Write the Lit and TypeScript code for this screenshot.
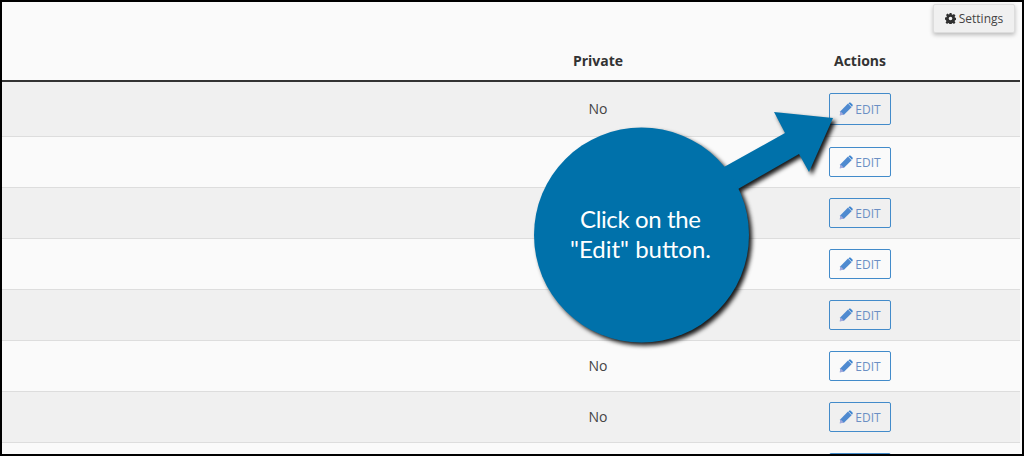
import {LitElement, css, html, svg} from 'lit';
import {customElement} from 'lit/decorators.js';

const ROWS = [
  {h: 55, top: 11, btn: 32, no: true},
  {h: 51, top: 10, btn: 30, no: false},
  {h: 51, top: 10, btn: 30, no: false},
  {h: 51, top: 10, btn: 30, no: false},
  {h: 51, top: 10, btn: 30, no: false},
  {h: 51, top: 10, btn: 30, no: true},
  {h: 51, top: 10, btn: 30, no: true},
  {h: 51, top: 10, btn: 30, no: false},
];

const pencil = svg`<path d="M.8 13.2 1.4 9.2 9 1.6l3.6 3.6L5 12.8z" fill="#4f8ad0"/><path d="M.8 13.2 1.4 9.2l3.6 3.6z" fill="#a3a9dc"/><path d="M9.9.9c.6-.6 1.4-.6 2 0l1.4 1.4c.6.6.6 1.4 0 2l-.3.4L9.4 1.2z" fill="#3f86d0"/>`;

const gear = svg`<path fill-rule="evenodd" fill="#2f2f2f" d="M4.9 0h2.2l.3 1.6 1 .4L9.8 1.1l1.6 1.6-.9 1.4.4 1 1.6.3v2.2l-1.6.3-.4 1 .9 1.4-1.6 1.6-1.4-.9-1 .4-.3 1.6H4.9l-.3-1.6-1-.4-1.4.9-1.6-1.6.9-1.4-.4-1L0 7.1V4.9l1.6-.3.4-1-.9-1.4 1.6-1.6 1.4.9 1-.4zM6 4a2 2 0 1 0 0 4 2 2 0 0 0 0-4z"/>`;

@customElement('app-root')
export class AppRoot extends LitElement {
  static override styles = css`
    :host {
      display: block;
      width: 1024px;
      height: 456px;
      overflow: hidden;
      font-family: 'Open Sans', sans-serif;
      color: #333;
    }

    .frame {
      position: relative;
      box-sizing: border-box;
      height: 456px;
      border: 2px solid #000;
      padding-right: 2px;
      background: #fafafa;
      overflow: hidden;
    }

    .head {
      height: 80px;
      box-sizing: border-box;
      border-bottom: 2px solid #333;
      display: grid;
      grid-template-columns: 1fr 120px 142px 120px 100px;
      grid-template-rows: 1fr auto;
      font-size: 14px;
      font-weight: 700;
    }

    .settings-wrap {
      grid-column: 1 / -1;
      display: flex;
      justify-content: flex-end;
      padding: 2px 5px 0 0;
      align-items: flex-start;
    }

    .settings {
      display: flex;
      align-items: center;
      gap: 3px;
      box-sizing: border-box;
      width: 82px;
      height: 29px;
      justify-content: center;
      background: #f0f0f0;
      border: 1px solid #ddd;
      border-radius: 2px;
      box-shadow: 0 2px 4px rgba(0, 0, 0, 0.25);
      font-size: 12px;
      font-weight: 400;
      color: #444;
    }

    .settings svg {
      width: 11px;
      height: 11px;
    }

    .th {
      padding-bottom: 10px;
      text-align: center;
      line-height: 19px;
    }

    .private {
      grid-column: 2;
    }

    .actions {
      grid-column: 4;
    }

    .row {
      display: grid;
      grid-template-columns: 1fr 120px 142px 120px 100px;
      box-sizing: border-box;
      border-bottom: 1px solid #ddd;
      font-size: 14px;
    }

    .row:nth-child(odd) {
      background: #f0f0f0;
    }

    .cell-no {
      grid-column: 2;
      align-self: center;
      text-align: center;
      line-height: 19px;
      padding-bottom: 2px;
      color: #444;
    }

    .cell-btn {
      grid-column: 4;
      display: flex;
      justify-content: center;
      align-items: flex-start;
    }

    .edit {
      display: flex;
      align-items: center;
      justify-content: center;
      gap: 2px;
      box-sizing: border-box;
      width: 62px;
      border: 1px solid #428bca;
      border-radius: 2px;
      background: #fafafa;
      color: #6b8fc4;
      font-size: 12px;
    }

    .row:nth-child(odd) .edit {
      background: #f0f0f0;
    }

    .edit svg {
      width: 14px;
      height: 14px;
    }

    .callout {
      position: absolute;
      left: -2px;
      top: -2px;
      width: 1024px;
      height: 456px;
      pointer-events: none;
    }

    .callout .shape {
      filter: drop-shadow(3px 3px 2px rgba(0, 0, 0, 0.9));
    }

    .callout text {
      font-family: 'Lato', sans-serif;
      font-size: 24px;
      fill: #fff;
      text-anchor: middle;
    }
  `;

  override render() {
    return html`
      <div class="frame">
        <div class="head">
          <div class="settings-wrap">
            <div class="settings">
              <svg viewBox="0 0 12 12">${gear}</svg>
              <span>Settings</span>
            </div>
          </div>
          <div class="th private">Private</div>
          <div class="th actions">Actions</div>
        </div>
        <div class="body">
          ${ROWS.map(
            (r) => html`
              <div class="row" style="height:${r.h}px">
                ${r.no ? html`<div class="cell-no">No</div>` : html`<div class="cell-no"></div>`}
                <div class="cell-btn" style="padding-top:${r.top}px">
                  <div class="edit" style="height:${r.btn}px">
                    <svg viewBox="0 0 14 14">${pencil}</svg>
                    <span>EDIT</span>
                  </div>
                </div>
              </div>
            `
          )}
        </div>
        <svg class="callout" viewBox="0 0 1024 456">
          <g class="shape" fill="#0071aa">
            <path d="M724 167 785 133 774 112 833 118 809 172 799 154 738 189z" />
            <circle cx="641.5" cy="235" r="107.5" />
          </g>
          <text x="640.5" y="228" textLength="121">Click on the</text>
          <text x="640.5" y="258">"Edit" button.</text>
        </svg>
      </div>
    `;
  }
}

declare global {
  interface HTMLElementTagNameMap {
    'app-root': AppRoot;
  }
}
